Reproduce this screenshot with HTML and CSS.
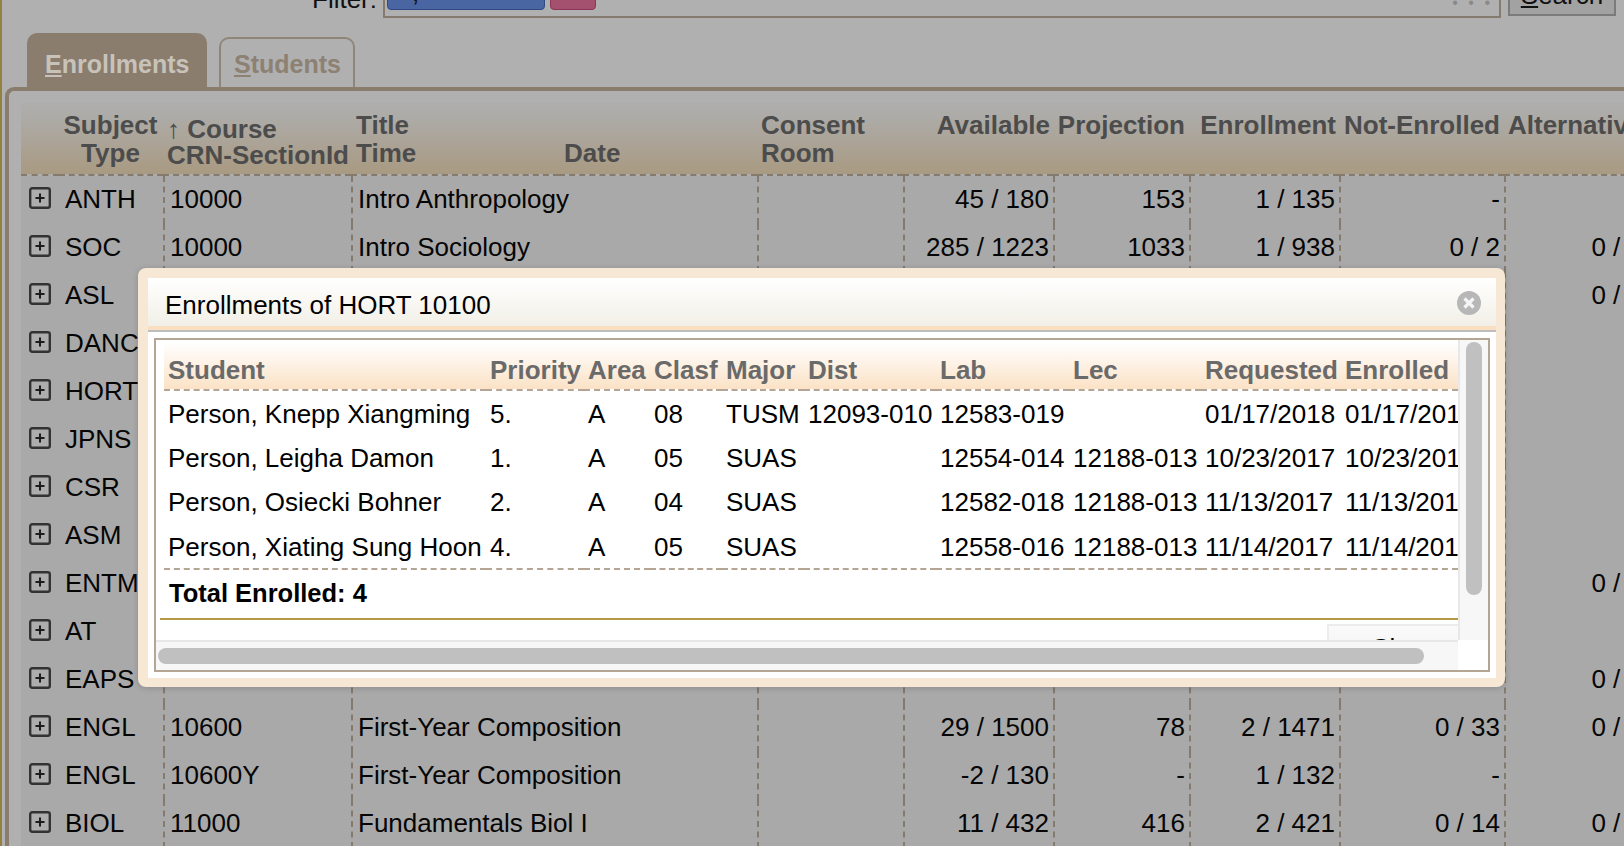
FILE: index.html
```html
<!DOCTYPE html>
<html lang="en">
<head>
<meta charset="utf-8">
<title>Enrollments</title>
<link rel="stylesheet" href="styles.css">
</head>
<body>
<svg class="defs" width="0" height="0" aria-hidden="true">
  <symbol id="plus" viewBox="0 0 22 22">
    <rect x="1.2" y="1.2" width="19.6" height="19.6" rx="2" fill="#adadad" stroke="#333" stroke-width="2.4"/>
    <path d="M6.5 11h9M11 6.5v9" stroke="#1c1c1c" stroke-width="2" fill="none"/>
  </symbol>
</svg>
<div class="page">
  <div class="filter-row">
    <span class="filter-label">Filter:</span>
    <div class="filter-box">
      <span class="chip chip-blue">,</span>
      <span class="chip chip-pink"></span>
      <span class="filter-dots">&#8226; &#8226; &#8226;</span>
    </div>
    <div class="search-btn"><u>S</u>earch</div>
  </div>
  <div class="tabs">
    <div class="tab tab-active"><u>E</u>nrollments</div>
    <div class="tab"><u>S</u>tudents</div>
  </div>
  <div class="panel">
    <table class="grid">
      <colgroup>
        <col class="c-exp"><col class="c-sub"><col class="c-crs"><col class="c-ttl"><col class="c-date"><col class="c-con"><col class="c-avl"><col class="c-prj"><col class="c-enr"><col class="c-not"><col class="c-alt">
      </colgroup>
      <thead>
        <tr>
          <th></th>
          <th class="ctr">Subject<br>Type</th>
          <th class="crs-head"><span class="sort">&#8593;</span> Course<br>CRN-SectionId</th>
          <th>Title<br>Time</th>
          <th class="bottom">Date</th>
          <th class="lead">Consent<br>Room</th>
          <th class="num tight">Available</th>
          <th class="num">Projection</th>
          <th class="num tight">Enrollment</th>
          <th class="num">Not-Enrolled</th>
          <th class="lead">Alternatives</th>
        </tr>
      </thead>
      <tbody>
        <tr><td class="exp"><svg class="plus"><use href="#plus"/></svg></td><td class="sub">ANTH</td><td>10000</td><td colspan="2">Intro Anthropology</td><td></td><td class="num">45 / 180</td><td class="num">153</td><td class="num">1 / 135</td><td class="num">-</td><td class="num"></td></tr>
        <tr><td class="exp"><svg class="plus"><use href="#plus"/></svg></td><td class="sub">SOC</td><td>10000</td><td colspan="2">Intro Sociology</td><td></td><td class="num">285 / 1223</td><td class="num">1033</td><td class="num">1 / 938</td><td class="num">0 / 2</td><td class="num">0 / 2</td></tr>
        <tr><td class="exp"><svg class="plus"><use href="#plus"/></svg></td><td class="sub">ASL</td><td></td><td colspan="2"></td><td></td><td class="num"></td><td class="num"></td><td class="num"></td><td class="num"></td><td class="num">0 / 2</td></tr>
        <tr><td class="exp"><svg class="plus"><use href="#plus"/></svg></td><td class="sub">DANC</td><td></td><td colspan="2"></td><td></td><td class="num"></td><td class="num"></td><td class="num"></td><td class="num"></td><td class="num"></td></tr>
        <tr><td class="exp"><svg class="plus"><use href="#plus"/></svg></td><td class="sub">HORT</td><td></td><td colspan="2"></td><td></td><td class="num"></td><td class="num"></td><td class="num"></td><td class="num"></td><td class="num"></td></tr>
        <tr><td class="exp"><svg class="plus"><use href="#plus"/></svg></td><td class="sub">JPNS</td><td></td><td colspan="2"></td><td></td><td class="num"></td><td class="num"></td><td class="num"></td><td class="num"></td><td class="num"></td></tr>
        <tr><td class="exp"><svg class="plus"><use href="#plus"/></svg></td><td class="sub">CSR</td><td></td><td colspan="2"></td><td></td><td class="num"></td><td class="num"></td><td class="num"></td><td class="num"></td><td class="num"></td></tr>
        <tr><td class="exp"><svg class="plus"><use href="#plus"/></svg></td><td class="sub">ASM</td><td></td><td colspan="2"></td><td></td><td class="num"></td><td class="num"></td><td class="num"></td><td class="num"></td><td class="num"></td></tr>
        <tr><td class="exp"><svg class="plus"><use href="#plus"/></svg></td><td class="sub">ENTM</td><td></td><td colspan="2"></td><td></td><td class="num"></td><td class="num"></td><td class="num"></td><td class="num"></td><td class="num">0 / 2</td></tr>
        <tr><td class="exp"><svg class="plus"><use href="#plus"/></svg></td><td class="sub">AT</td><td></td><td colspan="2"></td><td></td><td class="num"></td><td class="num"></td><td class="num"></td><td class="num"></td><td class="num"></td></tr>
        <tr><td class="exp"><svg class="plus"><use href="#plus"/></svg></td><td class="sub">EAPS</td><td></td><td colspan="2"></td><td></td><td class="num"></td><td class="num"></td><td class="num"></td><td class="num"></td><td class="num">0 / 2</td></tr>
        <tr><td class="exp"><svg class="plus"><use href="#plus"/></svg></td><td class="sub">ENGL</td><td>10600</td><td colspan="2">First-Year Composition</td><td></td><td class="num">29 / 1500</td><td class="num">78</td><td class="num">2 / 1471</td><td class="num">0 / 33</td><td class="num">0 / 2</td></tr>
        <tr><td class="exp"><svg class="plus"><use href="#plus"/></svg></td><td class="sub">ENGL</td><td>10600Y</td><td colspan="2">First-Year Composition</td><td></td><td class="num">-2 / 130</td><td class="num">-</td><td class="num">1 / 132</td><td class="num">-</td><td class="num"></td></tr>
        <tr><td class="exp"><svg class="plus"><use href="#plus"/></svg></td><td class="sub">BIOL</td><td>11000</td><td colspan="2">Fundamentals Biol I</td><td></td><td class="num">11 / 432</td><td class="num">416</td><td class="num">2 / 421</td><td class="num">0 / 14</td><td class="num">0 / 2</td></tr>
      </tbody>
    </table>
  </div>

  <div class="modal">
    <div class="modal-inner">
      <div class="modal-title">
        <span>Enrollments of HORT 10100</span>
        <svg class="modal-close" viewBox="0 0 24 24" width="24" height="24">
          <circle cx="12" cy="12" r="12" fill="#b7b7b7"/>
          <path d="M7.5 7.5l9 9M16.5 7.5l-9 9" stroke="#f4f4f4" stroke-width="3.2" fill="none"/>
        </svg>
      </div>
      <div class="modal-body">
        <div class="scroll-box">
          <div class="scroll-content">
            <table class="students">
              <colgroup>
                <col class="s-name"><col class="s-pri"><col class="s-area"><col class="s-clas"><col class="s-maj"><col class="s-dist"><col class="s-lab"><col class="s-lec"><col class="s-req"><col class="s-enr">
              </colgroup>
              <thead>
                <tr><th>Student</th><th>Priority</th><th>Area</th><th>Clasf</th><th>Major</th><th>Dist</th><th>Lab</th><th>Lec</th><th>Requested</th><th>Enrolled</th></tr>
              </thead>
              <tbody>
                <tr><td>Person, Knepp Xiangming</td><td>5.</td><td>A</td><td>08</td><td>TUSM</td><td>12093-010</td><td>12583-019</td><td></td><td>01/17/2018</td><td>01/17/2018</td></tr>
                <tr><td>Person, Leigha Damon</td><td>1.</td><td>A</td><td>05</td><td>SUAS</td><td></td><td>12554-014</td><td>12188-013</td><td>10/23/2017</td><td>10/23/2017</td></tr>
                <tr><td>Person, Osiecki Bohner</td><td>2.</td><td>A</td><td>04</td><td>SUAS</td><td></td><td>12582-018</td><td>12188-013</td><td>11/13/2017</td><td>11/13/2017</td></tr>
                <tr><td>Person, Xiating Sung Hoon</td><td>4.</td><td>A</td><td>05</td><td>SUAS</td><td></td><td>12558-016</td><td>12188-013</td><td>11/14/2017</td><td>11/14/2017</td></tr>
              </tbody>
            </table>
            <div class="total">Total Enrolled: 4</div>
            <div class="modal-foot"><div class="close-btn">Close</div></div>
          </div>
          <div class="vtrack"><div class="vthumb"></div></div>
          <div class="htrack"><div class="hthumb"></div></div>
          <div class="corner"></div>
        </div>
      </div>
    </div>
  </div>
</div>
</body>
</html>
```
FILE: styles.css
```css
* { box-sizing: border-box; }
html, body { margin: 0; padding: 0; height: 100%; overflow: hidden; }
body { background: #b0b0b0; font-family: "Liberation Sans", Arial, sans-serif; font-size: 26px; color: #000; }
.defs { display: block; height: 0; }
.page { position: relative; width: 1624px; height: 846px; overflow: hidden; border-left: 2px solid #94803f; background: #b0b0b0; }

.filter-row { display: flex; align-items: flex-end; height: 18px; overflow: hidden; padding-left: 310px; }
.filter-label { width: 71px; line-height: 30px; margin-bottom: 4px; color: #111; }
.filter-box { display: flex; align-items: flex-end; gap: 5px; width: 1118px; height: 40px; padding: 0 4px 6px 2px; border: 2px solid #857a6e; border-top: 0; }
.chip { display: block; height: 30px; border-radius: 4px; line-height: 22px; padding-left: 24px; color: #111; }
.chip-blue { width: 158px; background: #4a66a2; border: 1px solid #2f4a85; }
.chip-pink { width: 46px; background: #a4506f; border: 1px solid #8e3557; }
.filter-dots { margin-left: auto; margin-right: 2px; line-height: 10px; height: 4px; font-size: 16px; color: #8a8a8a; letter-spacing: 3px; margin-bottom: 8px; }
.search-btn { width: 108px; height: 36px; margin: 0 0 2px 7px; background: #a2a2a2; border: 2px solid #7b7b7b; border-top: 0; text-align: center; line-height: 30px; color: #111; }

.tabs { display: flex; align-items: flex-end; gap: 12px; height: 69px; padding-left: 25px; font-size: 25px; }
.tab { height: 50px; padding: 0 12px 0 13px; border: 2px solid #8f8578; border-bottom: 0; border-radius: 10px 10px 0 0; font-weight: bold; line-height: 51px; color: #8c8172; }
.tab-active { height: 54px; width: 180px; padding: 0 0 0 18px; border: 0; background: #8a7d6e; line-height: 62px; color: #c8c3ba; }

.panel { margin-left: 3px; width: 1700px; height: 760px; padding: 12px 0 0 12px; border-top: 4px solid #8a7d6e; border-left: 4px solid #8a7d6e; border-top-left-radius: 9px; background: #b0b0b0; }

.grid { table-layout: fixed; width: 1625px; border-collapse: separate; border-spacing: 0; }
.c-exp { width: 38px; } .c-sub { width: 104px; } .c-crs { width: 188px; } .c-ttl { width: 208px; } .c-date { width: 198px; }
.c-con { width: 146px; } .c-avl { width: 150px; } .c-prj { width: 136px; } .c-enr { width: 150px; } .c-not { width: 165px; } .c-alt { width: 142px; }
.grid th { height: 73px; padding: 8px 4px 0 5px; background: linear-gradient(#aeaeae 0%, #adaba7 20%, #a99a82 100%); border-bottom: 2px dashed #857a6e; color: #4c4c4c; font-weight: bold; line-height: 28px; text-align: left; vertical-align: top; white-space: nowrap; }
.grid th.ctr { text-align: center; padding-left: 3px; padding-right: 4px; }
.grid th.lead { padding-left: 4px; }
.grid th.num { text-align: right; padding-right: 4px; padding-left: 0; }
.grid th.tight { padding-right: 3px; }
.grid th.bottom { vertical-align: bottom; padding-bottom: 7px; padding-left: 5px; }
.grid th.crs-head { padding-top: 13px; padding-left: 4px; line-height: 26px; }
.sort { font-weight: normal; }
.grid td { height: 48px; padding: 0 4px 1px 5px; background: #a9a9a9; border-left: 2px dashed #857a6e; white-space: nowrap; vertical-align: middle; color: #050505; }
.grid td.exp { border-left: 0; padding: 0 0 5px 8px; }
.grid td.sub { border-left: 0; padding: 0 0 1px 6px; }
.grid td.num { text-align: right; }
.plus { display: block; width: 22px; height: 22px; }

.modal { position: absolute; left: 136px; top: 268px; width: 1367px; height: 419px; padding: 10px 9px 9px 10px; background: #f6e8d4; border-radius: 8px; box-shadow: 0 1px 6px rgba(0, 0, 0, .18); }
.modal-inner { display: flex; flex-direction: column; height: 100%; background: #fff; }
.modal-title { display: flex; align-items: center; justify-content: space-between; flex: none; height: 54px; padding: 5px 15px 0 17px; background: linear-gradient(#ffffff, #f1efe7); border-bottom: 6px solid #f9dfc0; position: relative; line-height: 40px; }
.modal-close { margin-bottom: 4px; }
.modal-title::after { content: ""; position: absolute; left: 0; right: 0; bottom: -6px; height: 2px; background: #bdbdbd; }
.modal-body { flex: 1; min-height: 0; padding: 6px; }
.scroll-box { display: grid; grid-template-columns: 1fr 30px; grid-template-rows: 1fr 30px; height: 100%; border: 2px solid #b5a595; }
.scroll-content { overflow: hidden; min-width: 0; padding-left: 4px; }
.students { table-layout: fixed; width: 1294px; margin-left: 4px; border-collapse: separate; border-spacing: 0; }
.s-name { width: 322px; } .s-pri { width: 98px; } .s-area { width: 66px; } .s-clas { width: 72px; } .s-maj { width: 82px; } .s-dist { width: 132px; }
.s-lab { width: 133px; } .s-lec { width: 132px; } .s-req { width: 140px; } .s-enr { width: 117px; }
.students th { height: 51px; padding: 10px 0 0 4px; background: linear-gradient(#ffffff 5%, #fbe2c6 100%); border-bottom: 2px dashed #b5a595; color: #6a6a6a; font-weight: bold; text-align: left; white-space: nowrap; overflow: hidden; line-height: 32px; }
.students td { height: 44px; padding: 3px 0 0 4px; white-space: nowrap; overflow: hidden; }
.students tbody tr:last-child td { height: 47px; border-bottom: 2px dashed #b5a595; }
.total { height: 50px; padding: 5px 0 0 9px; font-size: 25.5px; line-height: 36px; font-weight: bold; border-bottom: 2px solid #b59a45; }
.modal-foot { display: flex; padding: 4px 0 0 1167px; }
.close-btn { flex: none; width: 154px; padding: 7px 0; line-height: 30px; text-align: center; background: linear-gradient(#fafafa, #f0f0f0); border: 2px solid #ececec; }
.vtrack { padding: 2px 6px; background: #f7f7f7; border-left: 2px solid #e8e8e8; }
.vthumb { width: 16px; height: 253px; background: #c0c0c0; border-radius: 8px; }
.htrack { padding: 6px 34px 0 2px; background: #f7f7f7; border-top: 2px solid #e8e8e8; }
.hthumb { height: 16px; background: #c0c0c0; border-radius: 8px; }
.corner { background: #fff; }
```
